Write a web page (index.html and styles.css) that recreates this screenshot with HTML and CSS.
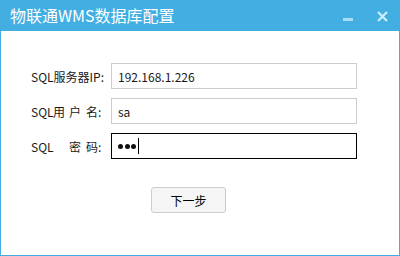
FILE: index.html
```html
<!DOCTYPE html>
<html lang="zh-CN">
<head>
    <meta charset="UTF-8">
    <title>物联通WMS数据库配置</title>
    <link rel="stylesheet" href="styles.css">
</head>
<body>
    <div class="window">
        <div class="titlebar">
            <span class="title">物联通WMS数据库配置</span>
            <div class="controls">
                <svg class="btn-min" width="10" height="10" viewBox="0 0 10 10">
                    <rect x="0" y="7" width="10" height="3" fill="#a8dbf4"/>
                </svg>
                <svg class="btn-close" width="11" height="11" viewBox="0 0 11 11">
                    <path d="M1 1 L10 10 M10 1 L1 10" stroke="#cdeefc" stroke-width="2.2"/>
                </svg>
            </div>
        </div>

        <div class="content">
            <div class="form">
                <div class="row">
                    <div class="label">SQL服务器IP:</div>
                    <div class="field">192.168.1.226</div>
                </div>
                <div class="row">
                    <div class="label">
                        <span class="c-sql">SQL</span><span class="c-a">用</span><span class="c-b">户</span><span class="c-c">名:</span>
                    </div>
                    <div class="field">sa</div>
                </div>
                <div class="row">
                    <div class="label">
                        <span class="c-sql">SQL</span><span class="c-a"></span><span class="c-b">密</span><span class="c-c">码:</span>
                    </div>
                    <div class="field focused">
                        <span class="dot"></span><span class="dot"></span><span class="dot"></span><span class="caret"></span>
                    </div>
                </div>
            </div>

            <button class="next">下一步</button>
        </div>
    </div>
</body>
</html>
```

FILE: styles.css
```css
* {
    margin: 0;
    padding: 0;
    box-sizing: border-box;
}

body {
    font-family: "Noto Sans CJK SC", "Noto Sans", sans-serif;
    background: #fff;
}

.window {
    width: 400px;
    height: 256px;
    border: 1px solid #42aee1;
    border-top: 0;
    background: #fff;
}

.titlebar {
    height: 31px;
    background: #42aee1;
    display: flex;
    align-items: center;
    padding: 0 11px 0 9px;
}

.title {
    color: #fff;
    font-size: 16px;
    line-height: 31px;
}

.controls {
    margin-left: auto;
    display: flex;
    align-items: center;
    gap: 24px;
    padding-top: 1px;
}

.btn-min,
.btn-close {
    display: block;
}

.content {
    padding: 32px 0 0 30px;
}

.form {
    display: flex;
    flex-direction: column;
    gap: 9px;
}

.row {
    display: flex;
    align-items: center;
    height: 26px;
}

.label {
    width: 80px;
    font-size: 12px;
    color: #1a1a1a;
    display: flex;
    white-space: nowrap;
}

.c-sql { width: 22px; }
.c-a { width: 16px; }
.c-b { width: 17px; }

.field {
    width: 246px;
    height: 26px;
    border: 1px solid #cccccc;
    padding-left: 6px;
    font-size: 12px;
    color: #1a1a1a;
    display: flex;
    align-items: center;
}

.field.focused {
    border-color: #000;
}

.dot {
    width: 5px;
    height: 5px;
    border-radius: 50%;
    background: #111;
    margin-right: 1.5px;
}

.caret {
    width: 1px;
    height: 16px;
    background: #000;
    margin-left: 0;
}

.next {
    display: block;
    margin: 28px 0 0 120px;
    width: 75px;
    height: 26px;
    border: 1px solid #cccccc;
    border-radius: 3px;
    background: #f5f5f5;
    font-family: "Noto Sans CJK SC", "Noto Sans", sans-serif;
    font-size: 12px;
    color: #000;
}
```
